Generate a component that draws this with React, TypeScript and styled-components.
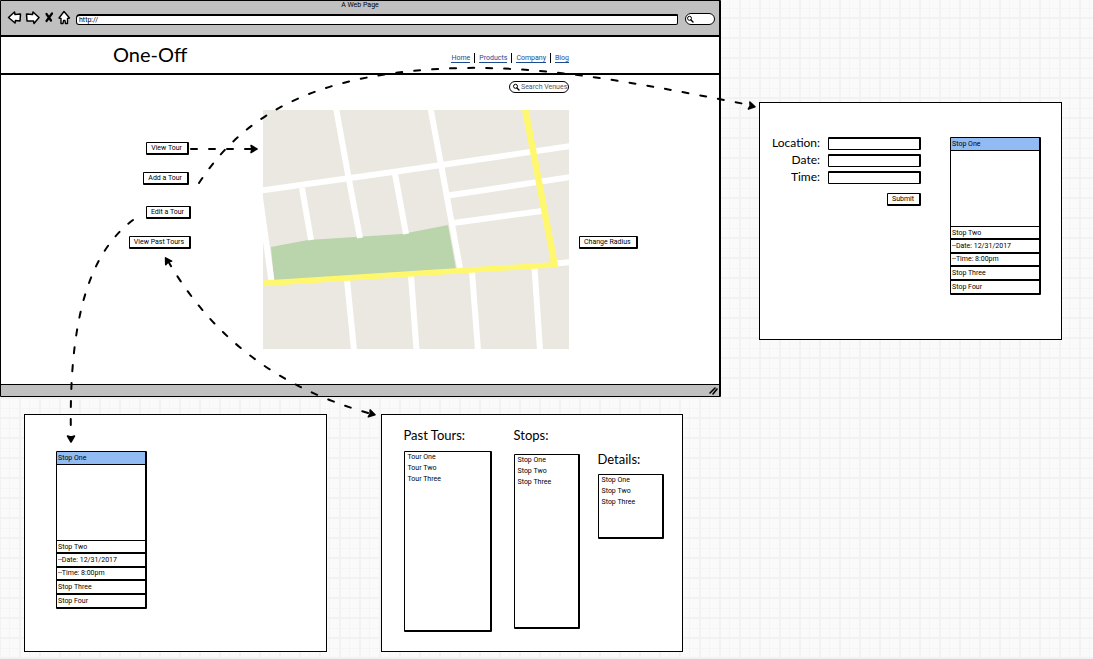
import React from 'react';
import styled, { createGlobalStyle } from 'styled-components';

const INK = '#000';
const CHROME = '#c0c0c0';
const HEADING_FONT = 'Lato, "Liberation Sans", sans-serif';

const GlobalStyle = createGlobalStyle`
  * { box-sizing: border-box; }
  body { margin: 0; }
  body, button, input {
    font-family: Roboto, "Liberation Sans", sans-serif;
    color: ${INK};
  }
  ul, h1, h2, p { margin: 0; padding: 0; list-style: none; font-weight: 400; }
`;

const Board = styled.div`
  position: relative;
  display: grid;
  grid-template-columns: minmax(0, 721fr) minmax(0, 372fr);
  min-height: 100vh;
  background-color: #fafafa;
  background-image:
    linear-gradient(90deg, #f2f2f2 2px, transparent 2px),
    linear-gradient(#f2f2f2 2px, transparent 2px),
    linear-gradient(90deg, #f5f5f5 1px, transparent 1px),
    linear-gradient(#f5f5f5 1px, transparent 1px);
  background-size: 20px 20px;
  background-position: 19px 0, 0 17px, 9px 0, 0 8px;
`;

const Column = styled.div<{ $aside?: boolean }>`
  padding: ${(p) => (p.$aside ? '102px 31px 0 38px' : '0')};
`;

const BrowserFrame = styled.section`
  background: #fff;
  border: solid ${INK};
  border-width: 1px 2px 1px 1px;
  border-radius: 1px;
`;

const Toolbar = styled.div`
  height: 36px;
  background: ${CHROME};
  border-bottom: 2px solid ${INK};
`;

const WindowTitle = styled.p`
  font-size: 7px;
  line-height: 9px;
  text-align: center;
`;

const ToolRow = styled.div`
  display: flex;
  align-items: center;
  height: 14px;
  padding: 0 4px 0 6px;
`;

const IconButton = styled.button`
  display: flex;
  padding: 0;
  margin-right: 3px;
  border: 0;
  background: none;
`;

const AddressInput = styled.input`
  flex: 1;
  min-width: 0;
  height: 11px;
  margin: 4px 7px 0 2px;
  padding: 0 2px;
  border: solid ${INK};
  border-width: 2px 1px 1px 1px;
  border-radius: 4px 1px 2px 3px;
  background: #fff;
  font-size: 7px;
  line-height: 8px;
`;

const Pill = styled.label<{ $wide?: boolean }>`
  display: flex;
  align-items: center;
  width: ${(p) => (p.$wide ? 60 : 30)}px;
  height: 12px;
  margin-top: ${(p) => (p.$wide ? 0 : 4)}px;
  padding-left: ${(p) => (p.$wide ? 2 : 0)}px;
  border: 1px solid ${INK};
  border-radius: 6px;
  background: #fff;
`;

const PillInput = styled.input`
  flex: 1;
  min-width: 0;
  height: 8px;
  padding: 0 0 0 1px;
  border: 0;
  background: none;
  font-size: 7px;
  line-height: 8px;
  &::placeholder { color: #556; opacity: 1; }
`;

const SiteHeader = styled.header`
  display: flex;
  justify-content: space-between;
  height: 38px;
  padding: 0 150px 0 112px;
  border-bottom: 2px solid ${INK};
`;

const Brand = styled.h1`
  font-family: ${HEADING_FONT};
  font-size: 20px;
  line-height: 35px;
`;

const Nav = styled.nav`
  display: flex;
  align-items: center;
  height: 10px;
  margin-top: 16px;
`;

const NavLink = styled.a`
  border-bottom: 1px solid #1d4b8f;
  color: #1d4b8f;
  font-size: 7px;
  line-height: 8px;
  text-decoration: none;
  & + & { margin-left: 9px; position: relative; }
  & + &::before {
    content: '';
    position: absolute;
    left: -5px;
    top: -1px;
    width: 1px;
    height: 10px;
    background: ${INK};
  }
`;

const SiteBody = styled.main`
  display: grid;
  grid-template-columns: minmax(0, 262fr) minmax(0, 306fr) minmax(0, 150fr);
  grid-template-rows: 29px auto;
  height: 309px;
  padding-top: 6px;
`;

const SearchCell = styled.div`
  grid-column: 2;
  display: flex;
  justify-content: flex-end;
`;

const Actions = styled.div`
  grid-column: 1;
  display: flex;
  flex-direction: column;
  gap: 21px;
  padding: 32px 72px 0 0;
`;

const ActionPair = styled.div<{ $inset?: boolean }>`
  display: flex;
  flex-direction: column;
  align-items: flex-end;
  gap: 17px;
  padding-right: ${(p) => (p.$inset ? 2 : 0)}px;
`;

const SketchButton = styled.button`
  height: 13px;
  padding: 0 5px 0 4px;
  border: solid ${INK};
  border-width: 1px 2px 2px 1px;
  border-radius: 1px;
  background: #fff;
  font-size: 7px;
  line-height: 10px;
  white-space: nowrap;
`;

const MapArea = styled.svg`
  display: block;
  width: 100%;
  height: 239px;
`;

const RadiusCell = styled.div`
  padding-left: 10px;
  margin-top: 126px;
  font-size: 0;
`;

const StatusBar = styled.footer`
  display: flex;
  justify-content: flex-end;
  align-items: center;
  height: 12px;
  padding-right: 1px;
  background: ${CHROME};
  border-top: 1px solid ${INK};
`;

const PanelRow = styled.div`
  display: grid;
  grid-template-columns: 1fr 1fr;
  gap: 54px;
  padding: 17px 38px 7px 24px;
`;

const Panel = styled.section<{ $pad: string }>`
  display: flex;
  align-items: flex-start;
  height: 238px;
  padding: ${(p) => p.$pad};
  border: 1px solid ${INK};
  background: #fff;
`;

const Accordion = styled.div`
  display: grid;
  grid-template-rows: 13px 75px repeat(5, 1fr);
  width: 91px;
  height: 158px;
  border: solid ${INK};
  border-width: 1px 2px 2px 1px;
  border-radius: 1px;
`;

const AccordionRow = styled.button<{ $open?: boolean }>`
  padding: 0 1px;
  border: solid ${INK};
  border-width: ${(p) => (p.$open ? '0 0 1px' : '1px 0')};
  background: ${(p) => (p.$open ? '#93bbf3' : '#fff')};
  font-size: 7px;
  line-height: 10px;
  text-align: left;
  &:last-child { border-bottom-width: 0; }
`;

const AccordionBody = styled.div`
  background: #fff;
`;

const TourForm = styled.form`
  display: grid;
  grid-template-columns: auto 93px;
  grid-auto-rows: 13px;
  gap: 4px 8px;
  margin-right: 29px;
`;

const FieldLabel = styled.label`
  font-family: ${HEADING_FONT};
  font-size: 12px;
  line-height: 11px;
  text-align: right;
`;

const FieldInput = styled.input`
  width: 100%;
  height: 13px;
  padding: 0 2px;
  border: solid ${INK};
  border-width: 2px 2px 1px 1px;
  border-radius: 1px;
  background: #fff;
  font-size: 7px;
`;

const SubmitCell = styled.div`
  grid-column: 2;
  padding-top: 5px;
  text-align: right;
  font-size: 0;
`;

const ListColumn = styled.div<{ $width: number; $top: number }>`
  width: ${(p) => p.$width}px;
  margin-top: ${(p) => p.$top}px;
  & + & { margin-left: 22px; }
  & + & + & { margin-left: 18px; }
`;

const ListTitle = styled.h2`
  font-family: ${HEADING_FONT};
  font-size: 13px;
  line-height: 16px;
  white-space: nowrap;
`;

const ListBox = styled.ul<{ $height: number; $gap: number }>`
  height: ${(p) => p.$height}px;
  margin-top: ${(p) => p.$gap}px;
  padding: 0 3px;
  border: solid ${INK};
  border-width: 1px 2px 2px 1px;
  border-radius: 1px;
  font-size: 7px;
  line-height: 11px;
`;

const Connectors = styled.svg`
  position: absolute;
  top: 0;
  left: 0;
  width: 100%;
  height: 659px;
  pointer-events: none;
`;

const toolIcons = [
  { name: 'Back', d: 'M1.500 7.500 L7.500 2 L8 4.500 L13.500 4 L13 11 L8.500 10.500 L8 13 Z' },
  { name: 'Forward', d: 'M1.500 4 L7.500 4.500 L8 2 L14 7.500 L9 13.500 L8.500 11 L2 11 Z' },
];

const ToolIcons = () => (
  <>
    {toolIcons.map((icon) => (
      <IconButton key={icon.name} type="button" aria-label={icon.name}>
        <svg width="15" height="15" viewBox="0 0 15 15">
          <path d={icon.d} fill="#fff" stroke={INK} strokeWidth="1.500" strokeLinejoin="round" />
        </svg>
      </IconButton>
    ))}
    <IconButton type="button" aria-label="Stop">
      <svg width="12" height="15" viewBox="0 0 12 15">
        <path d="M3.500 4 L8 10.500 M9 3.500 L3.500 11" stroke={INK} strokeWidth="2.200" fill="none" strokeLinecap="round" />
      </svg>
    </IconButton>
    <IconButton type="button" aria-label="Home">
      <svg width="13" height="15" viewBox="0 0 13 15">
        <path d="M1 8 L6 1.500 L11.500 8 L9.500 8.500 L9.500 13.500 L7.500 13.500 L7 10.500 L5.500 10.500 L5 13.500 L3 13.500 L3 8.500 Z" fill="#fff" stroke={INK} strokeWidth="1.400" strokeLinejoin="round" />
      </svg>
    </IconButton>
  </>
);

const Lens = () => (
  <svg width="8" height="8" viewBox="0 0 8 8" aria-hidden="true">
    <circle cx="3.500" cy="3.300" r="2" fill="none" stroke={INK} />
    <path d="M5 5 L7 7" stroke={INK} strokeWidth="1.400" strokeLinecap="round" />
  </svg>
);

const roads = [
  'M261 190.500 L400 171 L571 146',
  'M336 108 L349 180 L360 238',
  'M302 188 L311 240',
  'M395 174 L406 234',
  'M430.500 108 L442 170 L460 268',
  'M260 198 L271.500 281',
  'M448 195.500 L571 177',
  'M453 223 L542 211',
  'M556 263.500 L571 262',
  'M347 280 L354 350',
  'M411 276 L416.500 350',
  'M472 272 L478 350',
  'M534.500 267 L540 350',
];

const VenueMap = () => (
  <MapArea viewBox="263 110 306 239" preserveAspectRatio="none" role="img" aria-label="Map of venues">
    <rect x="263" y="110" width="306" height="239" fill="#ebe8e1" />
    <path d="M271 247 L308 240 L402 234 L448 225 L456 269 L274 281 Z" fill="#bad4ab" />
    {roads.map((d) => (
      <path key={d} d={d} fill="none" stroke="#fff" strokeWidth="6" />
    ))}
    <path d="M261 283.500 L558 264.500" fill="none" stroke="#fff86e" strokeWidth="5.500" />
    <path d="M525 108 L555 266.500" fill="none" stroke="#fff86e" strokeWidth="6.500" />
  </MapArea>
);

const connectorPaths = [
  'M191 149 L252 149',
  'M199 183 C250 105 330 72 460 68 C560 66 660 88 750 105',
  'M133 220 C93 250 68 310 71 438',
  'M168 261 C211 335 276 388 372 414',
];

const arrowHeads = [
  { x: 258, y: 149, turn: 0 },
  { x: 756, y: 107, turn: 12 },
  { x: 71, y: 443, turn: 90 },
  { x: 165, y: 257, turn: -122 },
  { x: 376, y: 415, turn: 14 },
];

const TourConnectors = () => (
  <Connectors viewBox="0 0 1093 659" preserveAspectRatio="none" aria-hidden="true">
    {connectorPaths.map((d) => (
      <path key={d} d={d} fill="none" stroke={INK} strokeWidth="2" strokeLinecap="round" strokeDasharray="6 12" />
    ))}
    {arrowHeads.map((h) => (
      <path
        key={`${h.x}-${h.y}`}
        d="M-7 -3.500 L-1 0 L-7 3.500 L-6 0 Z"
        transform={`translate(${h.x} ${h.y}) rotate(${h.turn})`}
        fill={INK}
        stroke={INK}
        strokeWidth="1.500"
        strokeLinejoin="round"
      />
    ))}
  </Connectors>
);

const StopAccordion = () => (
  <Accordion>
    <AccordionRow type="button" aria-expanded="true" $open>Stop One</AccordionRow>
    <AccordionBody />
    {['Stop Two', '--Date: 12/31/2017', '--Time: 8:00pm', 'Stop Three', 'Stop Four'].map((label) => (
      <AccordionRow key={label} type="button" aria-expanded="false">{label}</AccordionRow>
    ))}
  </Accordion>
);

const lists = [
  { title: 'Past Tours:', items: ['Tour One', 'Tour Two', 'Tour Three'], width: 88, top: 12, gap: 8, height: 181 },
  { title: 'Stops:', items: ['Stop One', 'Stop Two', 'Stop Three'], width: 66, top: 12, gap: 11, height: 175 },
  { title: 'Details:', items: ['Stop One', 'Stop Two', 'Stop Three'], width: 66, top: 36, gap: 7, height: 65 },
];

export default function App() {
  return (
    <>
      <GlobalStyle />
      <Board>
        <Column>
          <BrowserFrame>
            <Toolbar>
              <WindowTitle>A Web Page</WindowTitle>
              <ToolRow>
                <ToolIcons />
                <AddressInput aria-label="Address" defaultValue="http://" />
                <Pill>
                  <Lens />
                  <PillInput aria-label="Search the web" />
                </Pill>
              </ToolRow>
            </Toolbar>
            <SiteHeader>
              <Brand>One-Off</Brand>
              <Nav>
                {['Home', 'Products', 'Company', 'Blog'].map((label) => (
                  <NavLink key={label} href={`#${label.toLowerCase()}`}>{label}</NavLink>
                ))}
              </Nav>
            </SiteHeader>
            <SiteBody>
              <SearchCell>
                <Pill $wide>
                  <Lens />
                  <PillInput aria-label="Search venues" placeholder="Search Venues" />
                </Pill>
              </SearchCell>
              <Actions>
                <ActionPair $inset>
                  <SketchButton type="button">View Tour</SketchButton>
                  <SketchButton type="button">Add a Tour</SketchButton>
                </ActionPair>
                <ActionPair>
                  <SketchButton type="button">Edit a Tour</SketchButton>
                  <SketchButton type="button">View Past Tours</SketchButton>
                </ActionPair>
              </Actions>
              <VenueMap />
              <RadiusCell>
                <SketchButton type="button">Change Radius</SketchButton>
              </RadiusCell>
            </SiteBody>
            <StatusBar>
              <svg width="9" height="9" viewBox="0 0 9 9" aria-hidden="true">
                <path d="M1 7 L6 2 M4 8 L8 3" stroke={INK} strokeWidth="1.600" strokeLinecap="round" />
              </svg>
            </StatusBar>
          </BrowserFrame>
          <PanelRow>
            <Panel $pad="36px 0 0 31px">
              <StopAccordion />
            </Panel>
            <Panel $pad="0 0 0 22px">
              {lists.map((list) => (
                <ListColumn key={list.title} $width={list.width} $top={list.top}>
                  <ListTitle>{list.title}</ListTitle>
                  <ListBox $height={list.height} $gap={list.gap}>
                    {list.items.map((item) => (
                      <li key={item}>{item}</li>
                    ))}
                  </ListBox>
                </ListColumn>
              ))}
            </Panel>
          </PanelRow>
        </Column>
        <Column $aside>
          <Panel $pad="34px 20px 0 12px">
            <TourForm onSubmit={(e: React.FormEvent) => e.preventDefault()}>
              <FieldLabel htmlFor="location">Location:</FieldLabel>
              <FieldInput id="location" />
              <FieldLabel htmlFor="date">Date:</FieldLabel>
              <FieldInput id="date" />
              <FieldLabel htmlFor="time">Time:</FieldLabel>
              <FieldInput id="time" />
              <SubmitCell>
                <SketchButton type="submit">Submit</SketchButton>
              </SubmitCell>
            </TourForm>
            <StopAccordion />
          </Panel>
        </Column>
        <TourConnectors />
      </Board>
    </>
  );
}
